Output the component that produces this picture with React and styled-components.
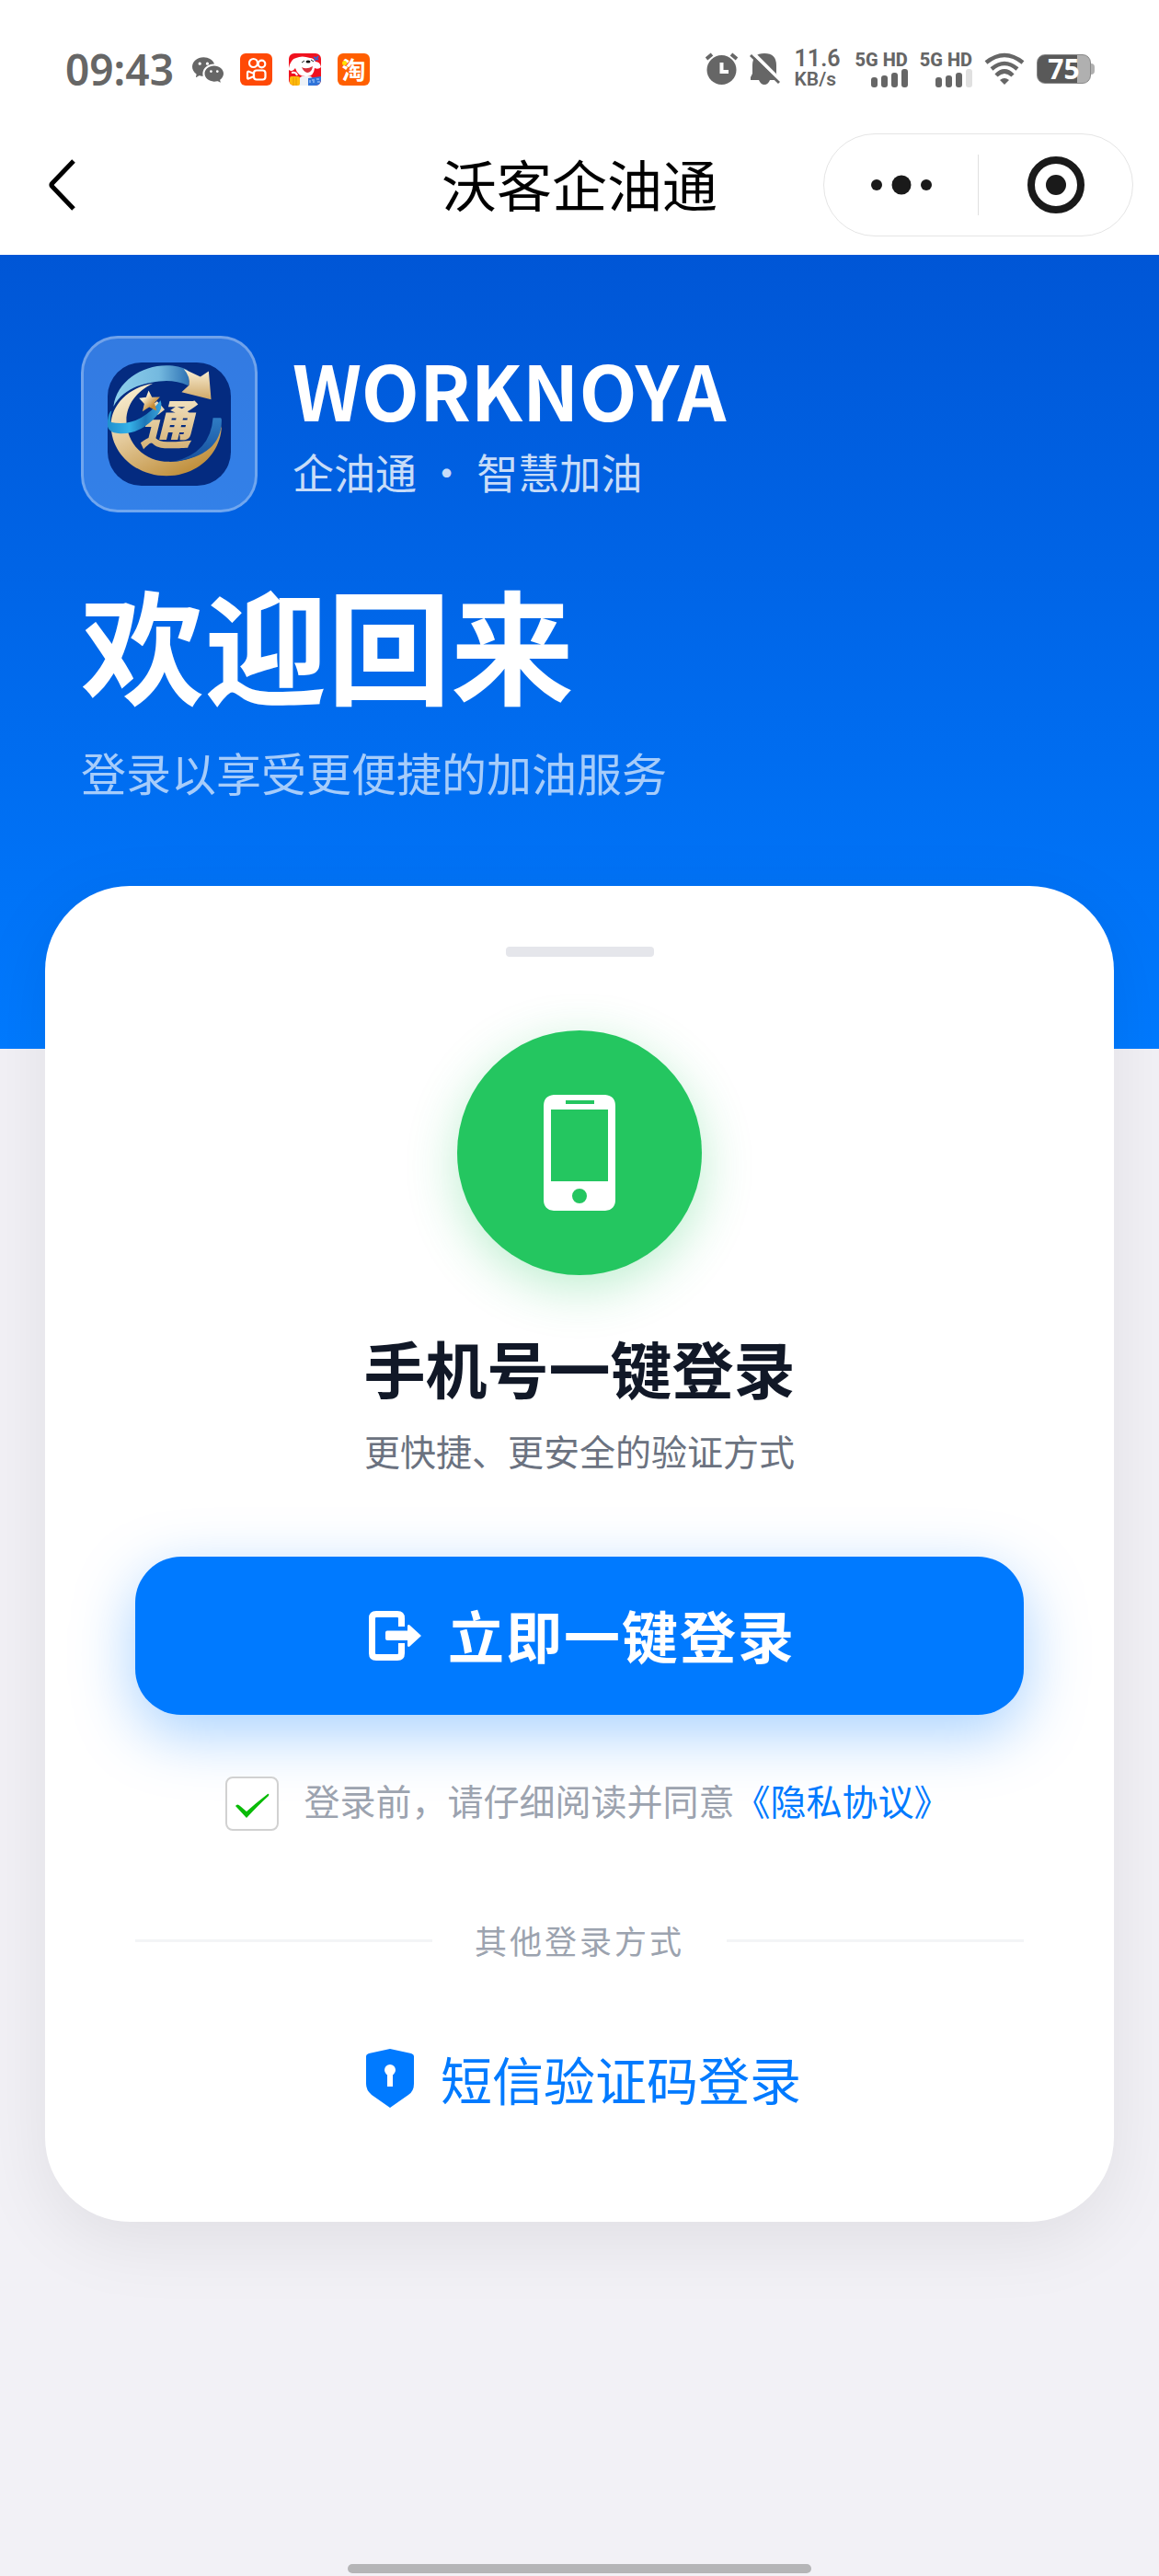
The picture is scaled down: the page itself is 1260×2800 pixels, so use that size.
import { useState } from "react";
import styled, { createGlobalStyle } from "styled-components";
import { BsWechat } from "react-icons/bs";

const App = () => {
  const [agreed, setAgreed] = useState(true);

  return (
    <Page>
      <GlobalStyle />
      <StatusBar>
        <StatusGroup $gap={18}>
          <Time>09:43</Time>
          <WechatIcon />
          <KuaishouIcon />
          <DogIcon />
          <TaobaoIcon />
        </StatusGroup>
        <StatusGroup $gap={13}>
          <AlarmIcon />
          <MutedIcon />
          <Speed>
            <SpeedValue>11.6</SpeedValue>
            <SpeedUnit>KB/s</SpeedUnit>
          </Speed>
          <Signal level={4} />
          <Signal level={3} />
          <WifiIcon />
          <Battery>
            <BatteryBody>75</BatteryBody>
            <BatteryTip />
          </Battery>
        </StatusGroup>
      </StatusBar>

      <NavBar>
        <BackButton type="button" aria-label="返回">
          <svg width="30" height="56" viewBox="0 0 30 56">
            <path
              d="M27 2 L4 26 Q2 28 4 30 L27 54"
              fill="none"
              stroke="#000"
              strokeWidth="5"
            />
          </svg>
        </BackButton>
        <NavTitle>沃客企油通</NavTitle>
        <Capsule>
          <CapsuleButton type="button" aria-label="更多">
            <svg width="66" height="22" viewBox="0 0 66 22">
              <circle cx="6" cy="11" r="6" fill="#1a1a1a" />
              <circle cx="33" cy="11" r="10.5" fill="#1a1a1a" />
              <circle cx="60" cy="11" r="6" fill="#1a1a1a" />
            </svg>
          </CapsuleButton>
          <CapsuleLine />
          <CapsuleButton type="button" aria-label="关闭">
            <svg width="62" height="62" viewBox="0 0 62 62">
              <circle
                cx="31"
                cy="31"
                r="27"
                fill="none"
                stroke="#1a1a1a"
                strokeWidth="8"
              />
              <circle cx="31" cy="31" r="11" fill="#1a1a1a" />
            </svg>
          </CapsuleButton>
        </Capsule>
      </NavBar>

      <Hero>
        <Brand>
          <LogoBox>
            <Logo />
          </LogoBox>
          <BrandText>
            <BrandName>WORKNOYA</BrandName>
            <BrandSlogan>企油通 · 智慧加油</BrandSlogan>
          </BrandText>
        </Brand>
        <Welcome>欢迎回来</Welcome>
        <WelcomeSub>登录以享受更便捷的加油服务</WelcomeSub>
      </Hero>

      <Card>
        <Handle />
        <PhoneCircle>
          <svg width="80" height="126" viewBox="0 0 80 126">
            <path
              fill="#fff"
              fillRule="evenodd"
              d="M12 0H68Q79 1 79 12V114Q79 125 68 126H12Q1 125 1 114V12Q1 1 12 0Z
                 M25 6V10H56V6Z M9 16V94H71V16Z
                 M40 102A8 8 0 1 0 40 118A8 8 0 1 0 40 102Z"
            />
          </svg>
        </PhoneCircle>
        <CardTitle>手机号一键登录</CardTitle>
        <CardSub>更快捷、更安全的验证方式</CardSub>

        <LoginButton type="button">
          <svg width="58" height="54" viewBox="0 0 58 54">
            <path
              d="M35.5 17V8Q35.5 3.5 31 3.5H8Q3.5 3.5 3.5 8V46Q3.5 50.5 8 50.5H31Q35.5 50.5 35.5 46V35"
              fill="none"
              stroke="#fff"
              strokeWidth="7"
            />
            <path
              d="M20 21.5H42V16Q43 14 45 16L57 27L45 38Q43 40 42 38V32H20Q18 32 18 30V23.5Q18 21.5 20 21.5Z"
              fill="#fff"
            />
          </svg>
          <ButtonText>立即一键登录</ButtonText>
        </LoginButton>

        <Agreement>
          <CheckBox
            id="agree"
            type="checkbox"
            checked={agreed}
            onChange={(e) => setAgreed(e.target.checked)}
          />
          <AgreementText>
            <label htmlFor="agree">登录前，请仔细阅读并同意</label>
            <PrivacyLink href="#privacy">《隐私协议》</PrivacyLink>
          </AgreementText>
        </Agreement>

        <Divider>
          <DividerText>其他登录方式</DividerText>
        </Divider>

        <SmsButton type="button">
          <svg width="54" height="64" viewBox="0 0 54 64">
            <path
              fill="#007aff"
              d="M27 0L50 5Q53 6 53 8V38Q53 46 47 50L27 64L7 50Q1 45 1 38V8Q1 6 4 5Z"
            />
            <circle cx="27" cy="23" r="6" fill="#fff" />
            <path d="M24 26H30V41H24Z" fill="#fff" />
          </svg>
          短信验证码登录
        </SmsButton>
      </Card>

      <HomeBar />
    </Page>
  );
};

export default App;

const WechatIcon = () => <BsWechat size={34} color="#666" />;

const KuaishouIcon = () => (
  <AppIcon viewBox="0 0 35 35">
    <rect width="35" height="35" rx="6" fill="#ff4906" />
    <g fill="none" stroke="#fff" strokeWidth="2.2">
      <circle cx="14.5" cy="10.5" r="4.5" />
      <circle cx="23.5" cy="11.5" r="3.8" />
      <rect x="15" y="18.5" width="12.5" height="10" rx="3" />
      <path d="M15 22L9 19.5Q8 19.5 8 21V26.5Q8 28 9 27.5L15 25" />
    </g>
  </AppIcon>
);

const DogIcon = () => (
  <AppIcon viewBox="0 0 35 35">
    <defs>
      <clipPath id="dogClip">
        <rect width="35" height="35" rx="6" />
      </clipPath>
    </defs>
    <g clipPath="url(#dogClip)">
      <rect width="35" height="35" fill="#f0121f" />
      <path d="M8 35Q9 27 14 25H24Q27 27 28 35Z" fill="#eef2f7" />
      <path
        d="M0 16Q2 6 8 5Q14 2 23 5Q27 5 29 9Q34 9 35 15Q32 18 28 16Q27 25 20 25Q10 26 7 16Q4 21 0 18Z"
        fill="#fff"
      />
      <path d="M14 15Q19 18 26 14Q25 21 20 21Q16 20 14 15Z" fill="#d9303a" />
      <ellipse cx="21" cy="9" rx="2.5" ry="1.5" fill="#111" />
      <path
        d="M14 10L17 8M24 7L27 9"
        stroke="#222"
        strokeWidth="1"
        fill="none"
      />
      <path d="M27 4L32 7M28 8L32 3" stroke="#3f5fc4" strokeWidth="2" />
      <path d="M3 21Q8 20 9 24" stroke="#fff" strokeWidth="2" fill="none" />
      <rect x="1" y="25" width="11" height="10" rx="2" fill="#ffbc0e" />
      <path d="M5 26V35M8 26V35" stroke="#e89c00" strokeWidth="1" />
      <path d="M21 27L35 25V35H21Z" fill="#2f74d9" />
      <path
        d="M23 29V32M25 29H28M26 31H28M30 28H33M31 31H34"
        stroke="#bcd8ff"
        strokeWidth="1"
      />
    </g>
  </AppIcon>
);

const TaobaoIcon = () => (
  <TaobaoBox>
    <TaobaoDot />
    淘
  </TaobaoBox>
);

const AlarmIcon = () => (
  <svg width="35" height="36" viewBox="0 0 35 36">
    <circle cx="17.5" cy="19" r="16" fill="#666" />
    <path d="M1 7L7 2M34 7L28 2" stroke="#666" strokeWidth="4" fill="none" />
    <path d="M17.5 11V21H25" stroke="#fff" strokeWidth="4" fill="none" />
  </svg>
);

const MutedIcon = () => (
  <svg width="33" height="36" viewBox="0 0 33 36">
    <path
      fill="#666"
      d="M3 14Q3 1 16 1Q29 1 29 14V23L32 30H22Q20 35 16 35Q12 35 10 30H1V27L3 23Z"
    />
    <path d="M3 0L34 31" stroke="#fff" strokeWidth="4" />
    <path d="M1 3L32 33" stroke="#666" strokeWidth="3" />
  </svg>
);

const Signal = ({ level }) => (
  <SignalBox>
    <SignalText>5G HD</SignalText>
    <SignalBars>
      {[11, 13, 16, 20].map((height, i) => (
        <SignalBar key={height} $height={height} $on={i < level} />
      ))}
    </SignalBars>
  </SignalBox>
);

const WifiIcon = () => (
  <svg width="44" height="36" viewBox="0 0 44 36">
    <g fill="none" stroke="#666" strokeWidth="4.5">
      <path d="M2 11Q22 -5 42 11" />
      <path d="M8 18Q22 6 36 18" />
      <path d="M13 25Q22 16 31 25" />
    </g>
    <path d="M17 30Q22 26 27 30L22 35Z" fill="#666" />
  </svg>
);

const Logo = () => (
  <LogoSvg viewBox="171 162 400 400">
    <defs>
      <linearGradient id="gold" x1="0" y1="0" x2="0.6" y2="1">
        <stop offset="0" stopColor="#fdf6dd" />
        <stop offset="0.5" stopColor="#e3c99a" />
        <stop offset="1" stopColor="#c1913f" />
      </linearGradient>
      <linearGradient id="glyph" x1="0" y1="0" x2="0" y2="1">
        <stop offset="0" stopColor="#faf0d6" />
        <stop offset="1" stopColor="#cfa868" />
      </linearGradient>
      <linearGradient id="sky" x1="0" y1="0" x2="1" y2="0">
        <stop offset="0" stopColor="#8fd0ec" />
        <stop offset="0.6" stopColor="#74b9df" />
        <stop offset="1" stopColor="#2e72b4" />
      </linearGradient>
      <linearGradient id="ribbon" x1="0" y1="0" x2="1" y2="0">
        <stop offset="0" stopColor="#1f8fce" />
        <stop offset="0.4" stopColor="#35b2e8" />
        <stop offset="0.7" stopColor="#1e77b8" />
        <stop offset="1" stopColor="#3aa4dc" />
      </linearGradient>
      <linearGradient id="deep" x1="0" y1="0" x2="0" y2="1">
        <stop offset="0" stopColor="#2f7cc4" />
        <stop offset="1" stopColor="#174f9c" />
      </linearGradient>
      <linearGradient id="star" x1="0" y1="0" x2="1" y2="1">
        <stop offset="0.3" stopColor="#fbedcd" />
        <stop offset="0.7" stopColor="#c48a35" />
      </linearGradient>
    </defs>
    <rect x="171" y="162" width="400" height="400" rx="110" fill="#042b80" />
    <path
      d="M318 230C240 242 182 300 182 365C182 460 265 530 362 530C460 530 538 460 541 368C520 440 450 485 370 484C290 484 232 425 232 350C232 300 265 255 318 230Z"
      fill="url(#gold)"
    />
    <path
      d="M190 305C200 225 280 172 362 172C390 172 412 178 430 186C438 202 436 225 433 237C410 226 385 222 362 222C300 225 225 240 190 305Z"
      fill="url(#sky)"
    />
    <path
      d="M418 183L472 208L499 190L507 282L411 258L435 236Q440 208 418 183Z"
      fill="url(#glyph)"
    />
    <path
      d="M513 342H538Q541 342 541 350Q540 465 385 484Q505 455 513 342Z"
      fill="url(#deep)"
    />
    <LogoText x="274" y="427" fill="url(#glyph)">
      通
    </LogoText>
    <path
      d="M171 350Q175 322 184 318Q178 345 182 356Q270 375 343 285Q352 310 330 335Q275 398 205 392Q175 388 171 370Z"
      fill="url(#ribbon)"
    />
    <path
      d="M304 253L315 275L341 274L323 293L330 319L306 307L284 321L290 296L273 278L296 275Z"
      fill="url(#star)"
    />
  </LogoSvg>
);

const GlobalStyle = createGlobalStyle`
  * {
    box-sizing: border-box;
  }

  body {
    margin: 0;
    background-color: #f2f1f6;
    font-family: "Noto Sans CJK SC", sans-serif;
  }

  button {
    padding: 0;
    border: none;
    background: none;
    font-family: inherit;
    cursor: pointer;
  }

  svg {
    display: block;
    flex-shrink: 0;
  }
`;

const Page = styled.div`
  display: flex;
  flex-direction: column;
  min-height: 100vh;
  background-color: #f2f1f6;
`;

const StatusBar = styled.header`
  display: flex;
  justify-content: space-between;
  align-items: center;
  height: 145px;
  padding: 5px 70px 0 71px;
  background-color: #fff;
  color: #666;
  font-family: "Noto Sans", sans-serif;
`;

const StatusGroup = styled.div`
  display: flex;
  align-items: center;
  gap: ${(props) => props.$gap}px;
`;

const Time = styled.span`
  margin-right: 2px;
  font-size: 46px;
  font-weight: 600;
  line-height: 48px;
`;

const AppIcon = styled.svg`
  width: 35px;
  height: 35px;
`;

const TaobaoBox = styled.span`
  position: relative;
  width: 35px;
  height: 35px;
  border-radius: 6px;
  background-color: #ff5f00;
  color: #fff;
  font-family: "Noto Sans CJK SC", sans-serif;
  font-size: 26px;
  font-weight: 700;
  line-height: 34px;
  text-align: center;
`;

const TaobaoDot = styled.i`
  position: absolute;
  top: 8px;
  left: 5px;
  width: 5px;
  height: 5px;
  border-radius: 50%;
  background-color: #ffe100;
`;

const Speed = styled.div`
  display: flex;
  flex-direction: column;
  gap: 1px;
  width: 48px;
  margin: 0 5px 0 3px;
  font-family: Roboto, sans-serif;
  font-weight: 600;
`;

const SpeedValue = styled.span`
  font-size: 25px;
  line-height: 22px;
`;

const SpeedUnit = styled.span`
  font-size: 21px;
  line-height: 21px;
`;

const SignalBox = styled.div`
  display: flex;
  flex-direction: column;
  align-items: flex-end;
`;

const SignalText = styled.span`
  font-family: Roboto, sans-serif;
  font-size: 20px;
  font-weight: 800;
  line-height: 20px;
`;

const SignalBars = styled.div`
  display: flex;
  align-items: flex-end;
  gap: 4px;
  height: 20px;
`;

const SignalBar = styled.span`
  width: 7px;
  height: ${(props) => props.$height}px;
  border-radius: 3px;
  background-color: ${(props) => (props.$on ? "#666" : "#e0e0e0")};
`;

const Battery = styled.div`
  display: flex;
  align-items: center;
`;

const BatteryBody = styled.div`
  width: 59px;
  height: 32px;
  border: 1px solid #888;
  border-radius: 9px;
  background: linear-gradient(90deg, #595959 75%, #b0b0b0 75%);
  color: #fff;
  font-size: 30px;
  font-weight: 700;
  line-height: 30px;
  text-align: center;
`;

const BatteryTip = styled.span`
  width: 4px;
  height: 12px;
  border-radius: 0 4px 4px 0;
  background-color: #b0b0b0;
`;

const NavBar = styled.nav`
  display: grid;
  grid-template-columns: 1fr auto 1fr;
  align-items: center;
  padding: 0 28px 20px;
  background-color: #fff;
`;

const BackButton = styled.button`
  justify-self: start;
  margin-left: 25px;
`;

const NavTitle = styled.h2`
  margin: 0;
  padding-bottom: 4px;
  font-size: 60px;
  font-weight: 400;
  line-height: 80px;
  color: #000;
`;

const Capsule = styled.div`
  display: flex;
  align-items: center;
  justify-self: end;
  width: 337px;
  height: 112px;
  border: 1px solid #e5e5e5;
  border-radius: 56px;
`;

const CapsuleButton = styled.button`
  display: flex;
  flex: 1;
  justify-content: center;
  align-items: center;
  height: 100%;
`;

const CapsuleLine = styled.span`
  width: 1px;
  height: 66px;
  background-color: #e0e0e0;
`;

const Hero = styled.section`
  padding: 88px 88px 269px;
  background: linear-gradient(180deg, #0056d6, #007aff);
  color: #fff;
`;

const Brand = styled.div`
  display: flex;
  align-items: center;
  gap: 38px;
`;

const LogoBox = styled.div`
  display: flex;
  justify-content: center;
  align-items: center;
  width: 192px;
  height: 192px;
  border: 3px solid rgba(255, 255, 255, 0.3);
  border-radius: 40px;
  background-color: rgba(255, 255, 255, 0.2);
`;

const LogoSvg = styled.svg`
  width: 134px;
  height: 134px;
`;

const LogoText = styled.text`
  font-family: "Noto Sans CJK SC", sans-serif;
  font-size: 170px;
  font-style: italic;
  font-weight: 900;
`;

const BrandText = styled.div`
  display: flex;
  flex-direction: column;
  gap: 10px;
  padding-bottom: 3px;
`;

const BrandName = styled.div`
  font-size: 82px;
  font-weight: 700;
  line-height: 96px;
`;

const BrandSlogan = styled.div`
  font-size: 45px;
  line-height: 64px;
  color: rgba(255, 255, 255, 0.8);
`;

const Welcome = styled.h1`
  margin: 61px 0 0;
  font-size: 134px;
  font-weight: 700;
  line-height: 160px;
`;

const WelcomeSub = styled.p`
  margin: 29px 0 0;
  font-size: 49px;
  line-height: 64px;
  color: rgba(255, 255, 255, 0.65);
`;

const Card = styled.main`
  display: flex;
  flex-direction: column;
  align-items: center;
  margin: -177px 49px 0;
  padding: 66px 98px 116px;
  border-radius: 92px;
  background-color: #fff;
  box-shadow: 0 20px 80px rgba(0, 0, 0, 0.08);
`;

const Handle = styled.div`
  width: 161px;
  height: 11px;
  border-radius: 4px;
  background-color: #e5e6eb;
`;

const PhoneCircle = styled.div`
  display: flex;
  justify-content: center;
  align-items: center;
  width: 266px;
  height: 266px;
  margin-top: 80px;
  border-radius: 50%;
  background-color: #24c660;
  box-shadow: 0 14px 54px rgba(36, 198, 96, 0.3);
`;

const CardTitle = styled.h2`
  margin: 60px 0 0;
  font-size: 67px;
  font-weight: 700;
  line-height: 80px;
  color: #111827;
`;

const CardSub = styled.p`
  margin: 22px 0 0;
  font-size: 39px;
  line-height: 56px;
  color: #6b7280;
`;

const LoginButton = styled.button`
  display: flex;
  justify-content: center;
  align-items: center;
  gap: 28px;
  width: 100%;
  height: 172px;
  margin-top: 88px;
  padding-left: 6px;
  border-radius: 50px;
  background-color: #007aff;
  box-shadow: 0 20px 67px rgba(0, 122, 255, 0.35);
  color: #fff;
`;

const ButtonText = styled.span`
  padding-bottom: 4px;
  font-size: 61px;
  font-weight: 700;
  letter-spacing: 2px;
`;

const Agreement = styled.div`
  display: flex;
  justify-content: center;
  align-items: center;
  gap: 27px;
  margin-top: 67px;
  padding-left: 18px;
`;

const CheckBox = styled.input`
  appearance: none;
  flex-shrink: 0;
  width: 58px;
  height: 59px;
  margin: 0;
  border: 2px solid #d1d1d1;
  border-radius: 8px;
  background-color: #fff;
  cursor: pointer;

  &:checked {
    background-image: url("data:image/svg+xml,%3Csvg xmlns='http://www.w3.org/2000/svg' viewBox='0 0 54 54'%3E%3Cpath d='M9 30Q11 27 14 30L21 36Q31 27 44 17Q46 16 45 19Q34 29 21 43Z' fill='%2309bb07'/%3E%3C/svg%3E");
  }
`;

const AgreementText = styled.div`
  padding-bottom: 8px;
  font-size: 39px;
  line-height: 51px;
  color: #9ca3af;
`;

const PrivacyLink = styled.a`
  color: #007aff;
  text-decoration: none;
`;

const Divider = styled.div`
  display: flex;
  align-items: center;
  gap: 46px;
  width: 100%;
  margin-top: 95px;

  &::before,
  &::after {
    content: "";
    flex: 1;
    height: 3px;
    background-color: #f3f4f6;
  }
`;

const DividerText = styled.span`
  font-size: 35px;
  line-height: 48px;
  letter-spacing: 3px;
  color: #9ca3af;
`;

const SmsButton = styled.button`
  display: flex;
  align-items: center;
  gap: 28px;
  margin-top: 86px;
  padding-left: 8px;
  font-size: 56px;
  line-height: 80px;
  color: #007aff;
`;

const HomeBar = styled.div`
  width: 40%;
  height: 10px;
  margin: auto auto 3px;
  border-radius: 5px;
  background-color: #b5b5b7;
`;
